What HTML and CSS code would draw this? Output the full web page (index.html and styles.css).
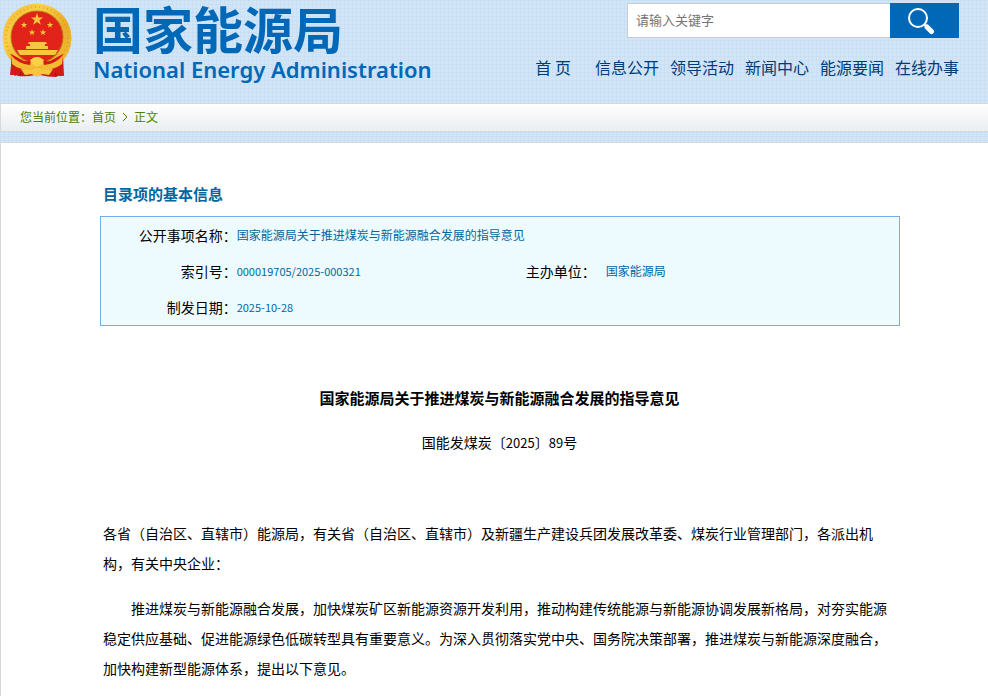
FILE: index.html
```html
<!DOCTYPE html>
<html lang="zh-CN">
<head>
<meta charset="utf-8">
<title>国家能源局关于推进煤炭与新能源融合发展的指导意见</title>
<link rel="stylesheet" href="styles.css">
</head>
<body>
<header class="header">
  <a class="brand" href="#">
    <svg class="emblem" viewBox="0 0 76 84" aria-hidden="true">
      <defs>
        <linearGradient id="gold" x1="0" y1="0" x2="1" y2="1">
          <stop offset="0" stop-color="#f0b428"/>
          <stop offset=".3" stop-color="#fbd048"/>
          <stop offset=".6" stop-color="#e8ac28"/>
          <stop offset="1" stop-color="#f3c03a"/>
        </linearGradient>
        <path id="star" d="M0-1 .23-.31H.95L.37.12.59.81 0 .39-.59.81-.37.12-.95-.31H-.23Z"/>
      </defs>
      <path d="M12 55 10 75q5-1 8 1 9 1 17-1h5q8 2 16 2 3-2 8-1l-1-21Z" fill="#d31a17"/>
      <path d="m16 62-1 14m7-12-2 12M59 62l2 14m-7-12 2 12" stroke="#8f1414" fill="none"/>
      <circle cx="37" cy="38" r="34.500" fill="url(#gold)"/>
      <circle cx="37" cy="38" r="31" fill="none" stroke="#d3931c" stroke-width="2" stroke-dasharray="1 3" opacity=".6"/>
      <circle cx="37" cy="37" r="26" fill="#e2231a" stroke="#b97512"/>
      <g fill="#f6c63c">
        <use href="#star" transform="translate(37 19.500) scale(6.500)"/>
        <use href="#star" transform="translate(24 25) scale(3.400)"/>
        <use href="#star" transform="translate(50 25) scale(3.400)"/>
        <use href="#star" transform="translate(32 32.500) scale(3.400)"/>
        <use href="#star" transform="translate(43 32.500) scale(3.400)"/>
        <path d="M29 42h17l1 2H28ZM30 44h15v2H30ZM26 46h22v3H26ZM17 50h41l-3 5H20Z"/>
      </g>
      <path d="M11 54 24 61q7 1 8-2 5-4 10 0 2 3 8 2l13-7v21q-7-1-12-4-4-4-8-4l-6-3-6 3q-5 0-8 4-5 3-12 4Z" fill="#d31a17"/>
      <path d="M11 55q7 9 19 10l1-5q6-6 12 0l1 5q12-1 19-10l-1 9q-8 6-19 6l-6-5-6 5q-12 0-19-6Z" fill="#f1bc32"/>
      <path d="M30 60q7-6 14 0l-2 4-5 3-5-3Z" fill="#fbd048"/>
      <path d="m21 69 10 1q6-5 12 0l10-1-4 6-7-1q-5 5-10 0l-7 1Z" fill="#f5c63e"/>
    </svg>
    <span class="brand-text">
      <span class="brand-cn">国家能源局</span>
      <span class="brand-en">National Energy Administration</span>
    </span>
  </a>
  <div class="tools">
    <form class="search">
      <input class="search-input" type="text" aria-label="搜索" placeholder="请输入关键字">
      <button class="search-button" type="button" aria-label="搜索">
        <svg class="search-icon" viewBox="0 0 28 28" aria-hidden="true">
          <circle cx="10" cy="11" r="9" fill="none" stroke="#fff" stroke-width="2"/>
          <path d="m16 17 3 3" stroke="#fff" stroke-width="2"/>
          <path d="m19 20 4.500 4.500" stroke="#fff" stroke-width="5" stroke-linecap="round"/>
        </svg>
      </button>
    </form>
    <nav class="nav">
      <a class="nav-home" href="#">首 页</a>
      <a href="#">信息公开</a>
      <a href="#">领导活动</a>
      <a href="#">新闻中心</a>
      <a href="#">能源要闻</a>
      <a href="#">在线办事</a>
    </nav>
  </div>
</header>
<div class="crumbs">您当前位置：<a href="#">首页</a><svg class="crumb-arrow" viewBox="0 0 18 12" aria-hidden="true"><path d="m7 2 4 4-4 4" fill="none" stroke="currentColor"/></svg><span>正文</span></div>
<main class="page">
  <h2 class="info-title">目录项的基本信息</h2>
  <table class="info">
    <tr><th scope="row">公开事项名称：</th><td colspan="3">国家能源局关于推进煤炭与新能源融合发展的指导意见</td></tr>
    <tr><th scope="row">索引号：</th><td class="code">000019705/2025-000321</td><th class="second" scope="row">主办单位：</th><td class="owner">国家能源局</td></tr>
    <tr><th scope="row">制发日期：</th><td class="code" colspan="3">2025-10-28</td></tr>
  </table>
  <article class="article">
    <h1>国家能源局关于推进煤炭与新能源融合发展的指导意见</h1>
    <p class="number">国能发煤炭〔<span>2025</span>〕<span>89</span>号</p>
    <p>各省（自治区、直辖市）能源局，有关省（自治区、直辖市）及新疆生产建设兵团发展改革委、煤炭行业管理部门，各派出机构，有关中央企业：</p>
    <p class="indent">推进煤炭与新能源融合发展，加快煤炭矿区新能源资源开发利用，推动构建传统能源与新能源协调发展新格局，对夯实能源稳定供应基础、促进能源绿色低碳转型具有重要意义。为深入贯彻落实党中央、国务院决策部署，推进煤炭与新能源深度融合，加快构建新型能源体系，提出以下意见。</p>
  </article>
</main>
</body>
</html>
```
FILE: styles.css
```css
* { box-sizing: border-box; }
body {
  margin: 0;
  color: #000;
  font: 14px/30px "Noto Sans CJK SC", sans-serif;
  background-color: #d2e5f6;
  background-image:
    repeating-linear-gradient(90deg, rgba(150, 185, 220, .1) 0 1px, transparent 1px 4px),
    repeating-linear-gradient(rgba(150, 185, 220, .1) 0 1px, transparent 1px 4px);
}
a { color: inherit; text-decoration: none; }
.header {
  display: flex;
  justify-content: space-between;
  height: 103px;
  padding-right: 29px;
}
.brand { display: flex; gap: 17px; color: #0068b7; }
.emblem { width: 76px; height: 84px; }
.brand-text { display: flex; flex-direction: column; white-space: nowrap; }
.brand-cn { font-size: 50px; line-height: 54px; font-weight: 700; }
.brand-en { font: 600 22px/30px "Noto Sans", sans-serif; }
.tools { display: flex; flex-direction: column; align-items: flex-end; padding-top: 3px; }
.search { display: flex; width: 332px; height: 35px; }
.search-input {
  flex: 1;
  min-width: 0;
  padding: 0 8px 2px;
  border: 1px solid #c4ccd4;
  border-right: 0;
  background: #fff;
  font: 13px "Noto Sans CJK SC", sans-serif;
}
.search-input::placeholder { color: #757575; }
.search-button {
  display: flex;
  align-items: center;
  justify-content: center;
  width: 69px;
  padding: 0 6px 0 0;
  border: 0;
  background: #0068b7;
}
.search-icon { width: 28px; height: 28px; }
.nav {
  display: flex;
  gap: 11px;
  margin-top: 16px;
  color: #003c78;
  font-size: 16px;
  line-height: 26px;
  white-space: nowrap;
}
.nav-home { margin-right: 13px; }
.crumbs {
  display: flex;
  align-items: center;
  height: 29px;
  padding: 0 0 2px 19px;
  border: 1px solid #d9d9d9;
  border-right: 0;
  background: linear-gradient(#fff, #e9eef2);
  color: #4b8200;
  font-size: 12px;
}
.crumb-arrow { width: 18px; height: 12px; }
.page {
  margin-top: 10px;
  padding: 36px 88px 12px 99px;
  border: 1px solid #d9d9d9;
  border-right: 0;
  background: #fff;
}
.info-title {
  margin: 0 0 7px;
  padding-left: 3px;
  color: #0066a1;
  font-size: 15px;
  line-height: 30px;
}
.info {
  width: 100%;
  border: 1px solid #70b0e4;
  border-spacing: 0;
  background: #edfbff;
  line-height: 36px;
}
.info th, .info td { height: 36px; padding: 0 0 1px; line-height: 34px; }
.info th { width: 17%; font-weight: 400; text-align: right; }
.info td { color: #0066a1; font-size: 12px; }
.info .code { width: 36%; font-size: 11px; }
.info .second { width: 9%; }
.info .owner { padding-left: 10px; }
.article { padding: 57px 8px 0 3px; }
.article h1 { margin: 0; padding-left: 4px; font-size: 15px; line-height: 30px; text-align: center; }
.article p { margin: 15px 0; }
.article .number {
  margin: 14px 0 60px;
  padding-left: 4px;
  text-align: center;
}
.number span { font-size: 13px; }
.article .indent { text-indent: 2em; }
```
